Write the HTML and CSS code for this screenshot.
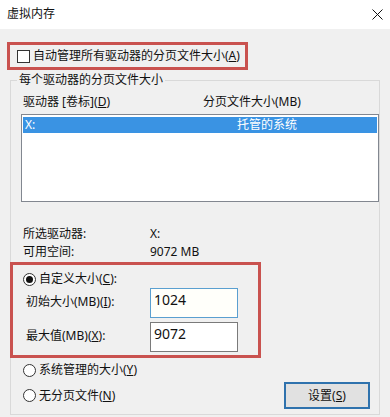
FILE: index.html
```html
<!DOCTYPE html>
<html lang="zh-CN">
<head>
<meta charset="utf-8">
<title>虚拟内存</title>
<link rel="stylesheet" href="styles.css">
</head>
<body>
<div class="window">
  <div class="titlebar">
    <span class="title">虚拟内存</span>
    <svg class="close" width="11" height="11" viewBox="0 0 11 11" aria-hidden="true">
      <path d="M0.5 0.5 L10.5 10.5 M10.5 0.5 L0.5 10.5" stroke="#111" stroke-width="1" fill="none"/>
    </svg>
  </div>
  <div class="body">
    <div class="autobox">
      <span class="check"></span>
      <span class="lbl">自动管理所有驱动器的分页文件大小(<u>A</u>)</span>
    </div>
    <fieldset class="group">
      <legend>每个驱动器的分页文件大小</legend>
      <div class="cols">
        <span>驱动器 [卷标](<u>D</u>)</span>
        <span>分页文件大小(MB)</span>
      </div>
      <div class="listbox">
        <div class="row selected">
          <span>X:</span>
          <span>托管的系统</span>
        </div>
      </div>
      <div class="info">
        <span>所选驱动器:</span><span>X:</span>
        <span>可用空间:</span><span>9072 MB</span>
      </div>
      <div class="custombox">
        <div class="radio-row">
          <span class="radio on"></span>
          <span class="lbl">自定义大小(<u>C</u>):</span>
        </div>
        <div class="field-row first">
          <span class="flabel">初始大小(MB)(<u>I</u>):</span>
          <span class="field focus">1024</span>
        </div>
        <div class="field-row">
          <span class="flabel">最大值(MB)(<u>X</u>):</span>
          <span class="field">9072</span>
        </div>
      </div>
      <div class="radio-row outside">
        <span class="radio"></span>
        <span class="lbl">系统管理的大小(<u>Y</u>)</span>
      </div>
      <div class="last-row">
        <div class="radio-row">
          <span class="radio"></span>
          <span class="lbl">无分页文件(<u>N</u>)</span>
        </div>
        <button class="btn" type="button">设置(<u>S</u>)</button>
      </div>
    </fieldset>
  </div>
</div>
</body>
</html>
```

FILE: styles.css
```css
html, body {
  margin: 0;
  padding: 0;
}
body {
  width: 390px;
  height: 417px;
  overflow: hidden;
  background: #f0f0f0;
  font-family: "Noto Sans", "Noto Sans CJK SC", sans-serif;
  font-size: 12px;
  line-height: 16px;
  color: #111;
}
u {
  text-decoration: underline;
  text-underline-offset: 1px;
}
.window {
  width: 390px;
  height: 417px;
}
.titlebar {
  height: 29px;
  background: #ffffff;
  display: flex;
  align-items: center;
  justify-content: space-between;
  padding: 0 7px 0 7px;
  box-sizing: border-box;
}
.title {
  font-size: 12px;
  line-height: 16px;
  margin-top: -1px;
}
.close {
  display: block;
  margin-top: -1px;
}
.body {
  padding-top: 13px;
}
.autobox {
  margin-left: 7px;
  width: 241px;
  height: 28px;
  box-sizing: border-box;
  border: 3px solid #c9524f;
  display: flex;
  align-items: center;
  padding-left: 7px;
  gap: 3px;
}
.check {
  width: 13px;
  height: 13px;
  box-sizing: border-box;
  border: 1px solid #333;
  background: #fff;
  flex: none;
}
.group {
  margin: 2px 0 0 10px;
  padding: 0 0 5px 0;
  width: 370px;
  box-sizing: border-box;
  border: 1px solid #d9d9d9;
  min-inline-size: 0;
}
.group legend {
  margin-left: 6px;
  padding: 0 2px;
  line-height: 16px;
}
.cols {
  margin-top: 6px;
  padding-left: 12px;
  display: grid;
  grid-template-columns: 180px 1fr;
}
.listbox {
  margin: 4px 0 0 10px;
  width: 358px;
  height: 88px;
  box-sizing: border-box;
  border: 1px solid #828790;
  background: #fff;
  padding: 2px 1px 0 1px;
}
.row {
  height: 16px;
  display: grid;
  grid-template-columns: 212px 1fr;
  padding-left: 2px;
}
.row.selected {
  background: #3a93e3;
  color: #fff;
}
.info {
  margin-top: 23px;
  padding-left: 12px;
  display: grid;
  grid-template-columns: 127px 1fr;
  line-height: 18px;
}
.custombox {
  margin: 1px 0 0 -1px;
  width: 251px;
  height: 96px;
  box-sizing: border-box;
  border: 3px solid #c9524f;
  padding: 6px 0 3px 10px;
}
.radio-row {
  display: flex;
  align-items: center;
  gap: 3px;
  height: 16px;
}
.radio {
  width: 13px;
  height: 13px;
  box-sizing: border-box;
  border: 1px solid #333;
  border-radius: 50%;
  background: #fff;
  flex: none;
  display: flex;
  align-items: center;
  justify-content: center;
}
.radio.on::after {
  content: "";
  width: 7px;
  height: 7px;
  border-radius: 50%;
  background: #111;
}
.field-row {
  display: grid;
  grid-template-columns: 124px 88px;
  padding-left: 3px;
  margin-top: 4px;
  align-items: start;
}
.field-row.first {
  margin-top: 1px;
}
.flabel {
  margin-top: 6px;
}
.field {
  height: 30px;
  box-sizing: border-box;
  border: 1px solid #7a7a7a;
  background: #fff;
  padding: 3px 3px 0 3px;
  font-family: "Noto Sans", sans-serif;
  font-size: 14px;
  line-height: 16px;
  color: #111;
}
.field.focus {
  border-color: #5a9fd0;
  background: #fffffa;
}
.radio-row.outside {
  margin: 4px 0 0 12px;
}
.last-row {
  margin: 4px 9px 0 12px;
  height: 27px;
  display: flex;
  align-items: center;
  justify-content: space-between;
}
.btn {
  width: 86px;
  height: 27px;
  box-sizing: border-box;
  border: 2px solid #2f72ad;
  background: #e1e1e1;
  font-family: "Noto Sans", "Noto Sans CJK SC", sans-serif;
  font-size: 12px;
  line-height: 16px;
  color: #111;
  padding: 0;
}
```
